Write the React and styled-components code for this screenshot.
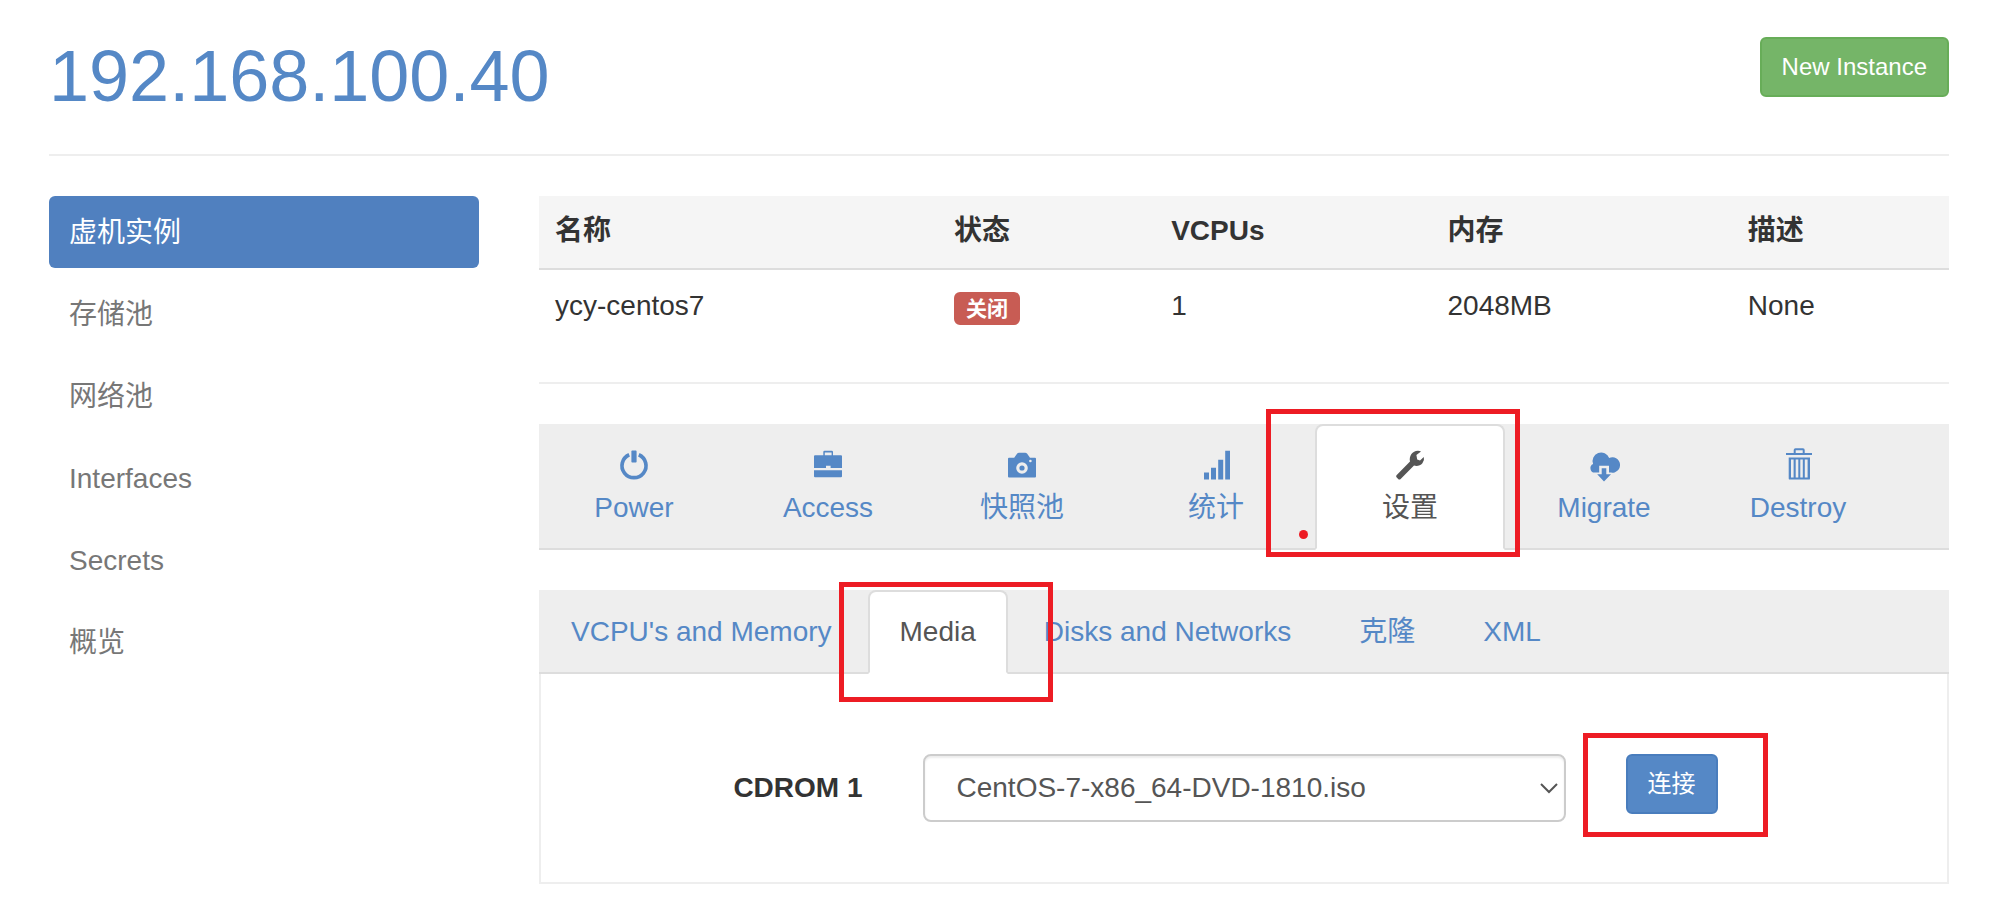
import React, { useState } from 'react';
import styled, { createGlobalStyle } from 'styled-components';

const GlobalStyle = createGlobalStyle`
  * {
    box-sizing: border-box;
  }

  body {
    margin: 0;
    background: #fff;
    color: #333;
    font-family: 'Liberation Sans', Arial, 'Noto Sans CJK SC', sans-serif;
    font-size: 28px;
    line-height: 40px;
  }

  a {
    color: #5588c6;
    text-decoration: none;
  }
`;

const Page = styled.div`
  padding: 37px 43px 38px 49px;
`;

const Header = styled.header`
  display: flex;
  justify-content: space-between;
  align-items: flex-start;
  padding-bottom: 39px;
  margin-bottom: 40px;
  border-bottom: 2px solid #eee;
`;

const Title = styled.h1`
  margin: 0;
  color: #5588c6;
  font-size: 72px;
  font-weight: normal;
  line-height: 78px;
`;

const Button = styled.button`
  position: relative;
  padding: 10px 20px;
  border: 2px solid ${props => (props.$success ? '#67ad58' : '#497dbd')};
  border-radius: 6px;
  background: ${props => (props.$success ? '#75b568' : '#5588c6')};
  color: #fff;
  font-family: inherit;
  font-size: 24px;
  line-height: 36px;
  white-space: nowrap;
  cursor: pointer;
`;

const Columns = styled.div`
  display: grid;
  grid-template-columns: 430px minmax(0, 1fr);
  gap: 60px;
`;

const SideNav = styled.nav`
  display: flex;
  flex-direction: column;
  gap: 10px;
`;

const SideLink = styled.a`
  && {
    padding: 17px 20px 15px;
    border-radius: 6px;
    background: ${props => (props.$active ? '#5080bf' : 'transparent')};
    color: ${props => (props.$active ? '#fff' : '#777')};
  }
`;

const Table = styled.table`
  width: 100%;
  table-layout: fixed;
  border-collapse: separate;
  border-spacing: 0;
`;

const HeadCell = styled.th`
  width: ${props => props.$width};
  height: 74px;
  padding: 15px 16px 17px;
  border-bottom: 2px solid #ddd;
  background: #f5f5f5;
  text-align: left;
`;

const Cell = styled.td`
  height: 72px;
  padding: 16px;
  vertical-align: top;
`;

const Status = styled.span`
  display: block;
  width: fit-content;
  margin-top: 6px;
  padding: 0 12px;
  border-radius: 6px;
  background: #c85c54;
  color: #fff;
  font-size: 21px;
  font-weight: bold;
  line-height: 33px;
`;

const Divider = styled.hr`
  margin: 40px 0;
  border: 0;
  border-top: 2px solid #eee;
`;

const Tabs = styled.nav`
  display: flex;
  gap: 4px;
  background: #eee;
  box-shadow: inset 0 -2px #ddd;
`;

const Tab = styled.a`
  position: relative;
  padding: 20px 30px;
  border: 2px solid transparent;
  border-radius: 8px 8px 0 0;
  white-space: nowrap;

  ${props => props.$active && `
    && {
      z-index: 1;
      border-color: #ddd #ddd #fff;
      background: #fff;
      color: #555;
    }
  `}
`;

const IconTab = styled(Tab)`
  display: flex;
  flex-direction: column;
  align-items: center;
  gap: 8px;
  flex: 0 1 190px;
  padding: 24px 0 20px;
`;

const Icon = styled.svg`
  width: 28px;
  height: 30px;
  overflow: visible;
  fill: currentColor;
`;

const ActionTabs = styled(Tabs)`
  margin-bottom: 40px;
`;

const Panel = styled.div`
  padding: 80px 0 60px;
  border: 2px solid #eee;
  border-top: 0;
`;

const FormRow = styled.form`
  display: grid;
  grid-template-columns: 1fr 2fr 1fr;
  gap: 60px;
  align-items: start;
`;

const Label = styled.label`
  padding: 14px 0;
  font-weight: bold;
  text-align: right;
`;

const SelectBox = styled.div`
  position: relative;
`;

const Select = styled.select`
  display: block;
  width: 100%;
  height: 68px;
  padding: 0 32px;
  border: 2px solid #ccc;
  border-radius: 8px;
  appearance: none;
  background: #fff;
  box-shadow: inset 0 2px 2px rgba(0, 0, 0, 0.075);
  color: #555;
  font: inherit;
`;

const Chevron = styled.svg`
  position: absolute;
  top: 29px;
  right: 8px;
  width: 18px;
  height: 11px;
  fill: none;
  stroke: #555;
  stroke-width: 2;
  pointer-events: none;
`;

// Red outline drawn over the control it points out
const Highlight = styled.span`
  position: absolute;
  z-index: 2;
  inset: ${props => props.$inset};
  border: 5px solid #ed1c24;
  pointer-events: none;
`;

const Dot = styled.span`
  position: absolute;
  bottom: 9px;
  left: -18px;
  width: 9px;
  height: 9px;
  border-radius: 50%;
  background: #ed1c24;
`;

const icons = {
  power: (
    <>
      <path d="M9.2 4.7A12 12 0 1 0 18.8 4.7" fill="none" stroke="currentColor" strokeWidth="3.7" />
      <rect x="11.4" y="0.6" width="5.2" height="12" rx="0.8" />
    </>
  ),
  briefcase: (
    <path
      fillRule="evenodd"
      d="M9.3 5.3V2Q9.3.7 10.6.7H17.7Q19 .7 19 2V5.3H27Q28 5.3 28 6.3V18H16.6V15.7H12V18H0V6.3Q0 5.3 1 5.3ZM10.8 5.3H17.6V2.6H10.8ZM0 20.2H28V26.2Q28 27.3 27 27.3H1Q0 27.3 0 26.2Z"
    />
  ),
  camera: (
    <path
      fillRule="evenodd"
      d="M1 7.7H6.2L9.2 3.6Q9.9 2.7 11 2.7H17.2Q18.3 2.7 19 3.6L22 7.7H27Q28 7.7 28 8.7V26.6Q28 27.6 27 27.6H1Q0 27.6 0 26.6V8.7Q0 7.7 1 7.7ZM14 12.2A5.8 5.8 0 1 0 14 23.8A5.8 5.8 0 1 0 14 12.2ZM14 15.4A2.6 2.6 0 1 1 14 20.6A2.6 2.6 0 1 1 14 15.4ZM22.4 9.7A1.3 1.3 0 1 0 22.4 12.3A1.3 1.3 0 1 0 22.4 9.7Z"
    />
  ),
  signal: <path d="M2 22.6H7V29.6H2ZM9 17.7H14V29.6H9ZM16.2 9.7H21.2V29.6H16.2ZM23.2.7H28V29.6H23.2Z" />,
  wrench: (
    <path d="M.5 25.2L14 11.6C12.8 6 16.5.6 22 .7Q24 .7 25 1.4L20.4 5L21.2 9.4L24 10.5L27.8 7Q28.8 10.2 26.4 13.2C24.3 15.9 20.8 16.4 18 15.6L4.4 29.2Q3.4 30 2.4 29.2L.5 27.2Q-.3 26.2 .5 25.2Z" />
  ),
  cloud: (
    <>
      <path d="M9.2 22.6H4.6A4.5 4.5 0 0 1 3.1 14A8.5 8.5 0 0 1 19.2 8A7.7 7.7 0 1 1 21 22.6H19V15.8H9.2Z" />
      <path d="M11.7 18.2H16.3V24.3H21L14 31.6L7.2 24.3H11.7Z" />
    </>
  ),
  trash: (
    <path
      fillRule="evenodd"
      d="M2 3H9.7V0Q9.7-1.8 11.5-1.8H19Q20.7-1.8 20.7 0V3H28V5H2ZM11.7 3H18.7V.3H11.7ZM4.7 7.4H26V28.4Q26 29.6 24.8 29.6H5.9Q4.7 29.6 4.7 28.4ZM7 9.4V27.6H9.6V9.4ZM11.7 9.4V27.6H14.3V9.4ZM16.3 9.4V27.6H18.8V9.4ZM20.8 9.4V27.6H23.6V9.4Z"
    />
  ),
};

const sideLinks = ['虚机实例', '存储池', '网络池', 'Interfaces', 'Secrets', '概览'];

const columns = [
  { label: '名称', width: '28.3%' },
  { label: '状态', width: '15.4%' },
  { label: 'VCPUs', width: '19.6%' },
  { label: '内存', width: '21.3%' },
  { label: '描述', width: '15.4%' },
];

const actions = [
  { label: 'Power', icon: 'power' },
  { label: 'Access', icon: 'briefcase' },
  { label: '快照池', icon: 'camera' },
  { label: '统计', icon: 'signal' },
  { label: '设置', icon: 'wrench', active: true },
  { label: 'Migrate', icon: 'cloud' },
  { label: 'Destroy', icon: 'trash' },
];

const settings = ["VCPU's and Memory", 'Media', 'Disks and Networks', '克隆', 'XML'];

const App = () => {
  const [image, setImage] = useState('CentOS-7-x86_64-DVD-1810.iso');

  return (
    <Page>
      <GlobalStyle />
      <Header>
        <Title>192.168.100.40</Title>
        <Button type="button" $success>New Instance</Button>
      </Header>
      <Columns>
        <SideNav>
          {sideLinks.map((label, i) => (
            <SideLink key={label} href="#" $active={i === 0}>{label}</SideLink>
          ))}
        </SideNav>
        <main>
          <Table>
            <thead>
              <tr>
                {columns.map(col => (
                  <HeadCell key={col.label} $width={col.width}>{col.label}</HeadCell>
                ))}
              </tr>
            </thead>
            <tbody>
              <tr>
                <Cell>ycy-centos7</Cell>
                <Cell><Status>关闭</Status></Cell>
                <Cell>1</Cell>
                <Cell>2048MB</Cell>
                <Cell>None</Cell>
              </tr>
            </tbody>
          </Table>
          <Divider />
          <ActionTabs>
            {actions.map(({ label, icon, active }) => (
              <IconTab key={label} href="#" $active={active}>
                <Icon viewBox="0 0 28 30" aria-hidden="true">{icons[icon]}</Icon>
                <span>{label}</span>
                {active && <Dot />}
                {active && <Highlight $inset="-17px -17px -9px -51px" />}
              </IconTab>
            ))}
          </ActionTabs>
          <Tabs>
            {settings.map(label => (
              <Tab key={label} href="#" $active={label === 'Media'}>
                {label}
                {label === 'Media' && <Highlight $inset="-10px -47px -30px -31px" />}
              </Tab>
            ))}
          </Tabs>
          <Panel>
            <FormRow onSubmit={e => e.preventDefault()}>
              <Label htmlFor="cdrom">CDROM 1</Label>
              <SelectBox>
                <Select id="cdrom" value={image} onChange={e => setImage(e.target.value)}>
                  <option>CentOS-7-x86_64-DVD-1810.iso</option>
                </Select>
                <Chevron viewBox="0 0 18 11" aria-hidden="true">
                  <path d="M1 1L9 9L17 1" />
                </Chevron>
              </SelectBox>
              <div>
                <Button type="submit">
                  连接
                  <Highlight $inset="-23px -52px -25px -45px" />
                </Button>
              </div>
            </FormRow>
          </Panel>
        </main>
      </Columns>
    </Page>
  );
};

export default App;
